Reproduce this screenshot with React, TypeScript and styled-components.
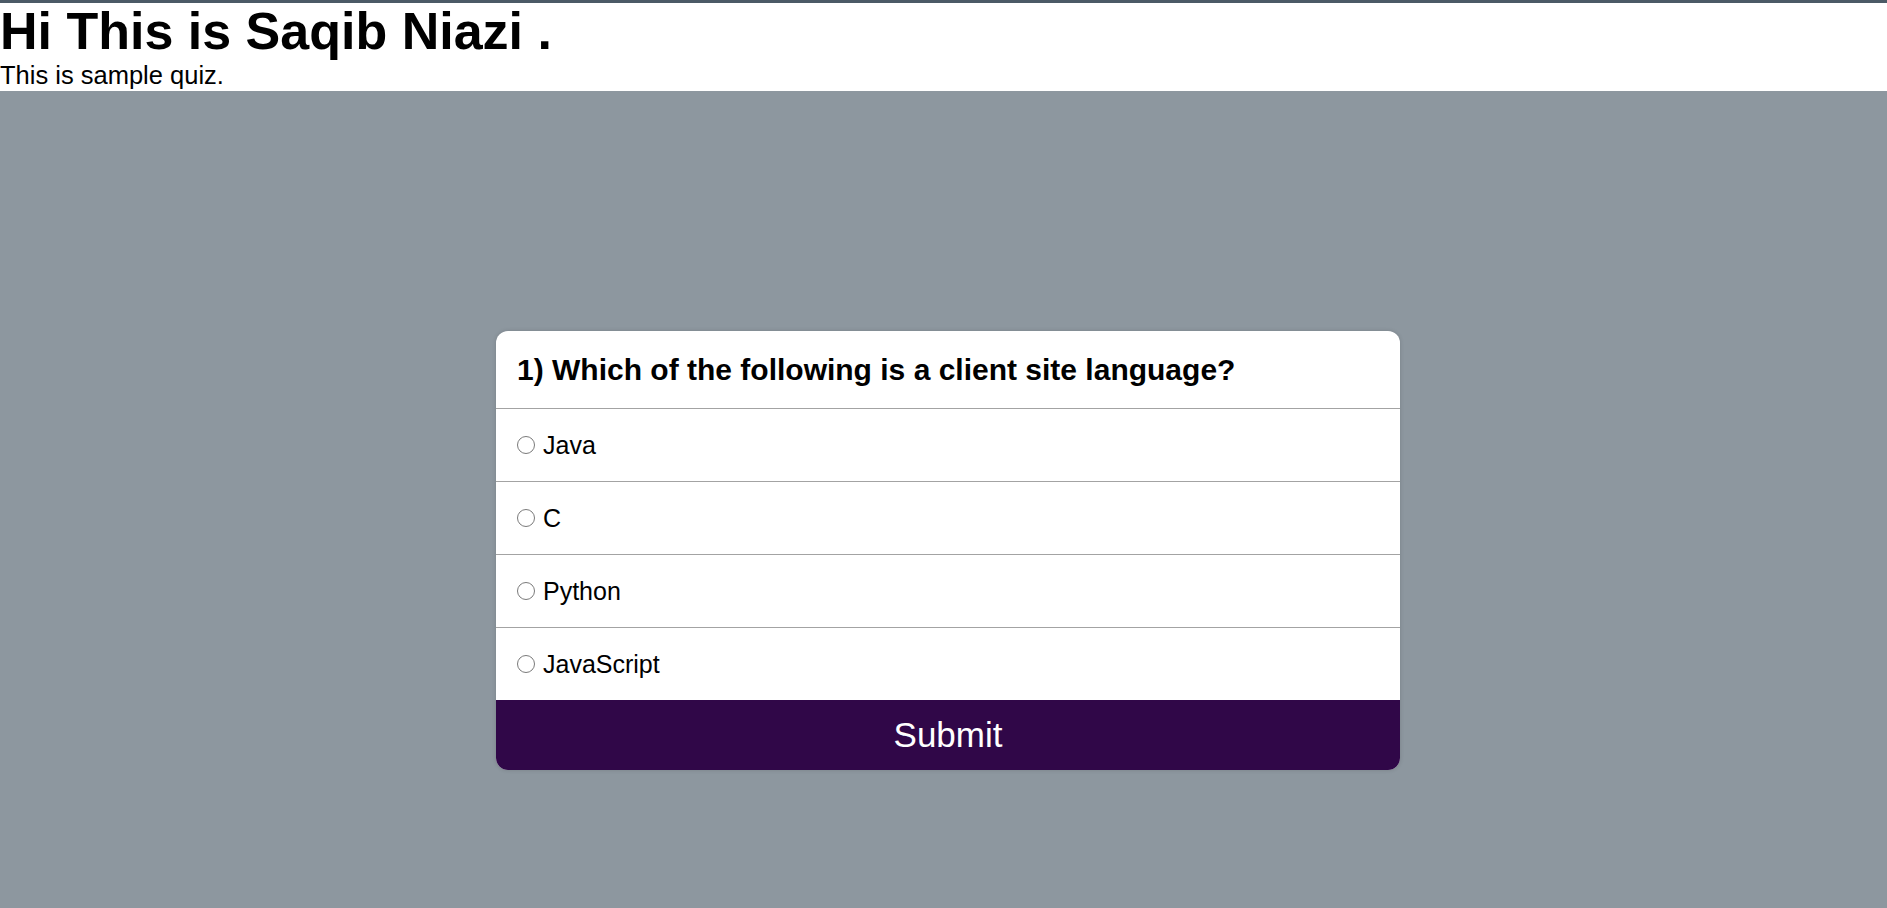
import { useState } from "react";
import styled, { createGlobalStyle } from "styled-components";

const GlobalStyle = createGlobalStyle`
  html, body {
    margin: 0;
    padding: 0;
    height: 100%;
  }
  body {
    font-family: "Liberation Sans", Arial, sans-serif;
    background: #8d979f;
    color: #000;
  }
  #root {
    min-height: 100%;
  }
`;

const options = ["Java", "C", "Python", "JavaScript"];

function App() {
  const [picked, setPicked] = useState<string | null>(null); // chosen answer

  return (
    <>
      <GlobalStyle />
      <Page>
        <Header>
          <Title>Hi This is Saqib Niazi .</Title>
          <Subtitle>This is sample quiz.</Subtitle>
        </Header>
        <Main>
          <Card>
            <Question>1) Which of the following is a client site language?</Question>
            {options.map((opt) => (
              <Option key={opt}>
                <Radio
                  type="radio"
                  name="answer"
                  checked={picked === opt}
                  onChange={() => setPicked(opt)}
                />
                <span>{opt}</span>
              </Option>
            ))}
            <SubmitButton>Submit</SubmitButton>
          </Card>
        </Main>
      </Page>
    </>
  );
}

export default App;

const Page = styled.div`
  min-height: 908px;
  display: flex;
  flex-direction: column;
`;

const Header = styled.header`
  background: #fff;
  border-top: 3px solid #4b5a66;
`;

const Title = styled.h1`
  margin: 0;
  font-size: 52px;
  line-height: 56px;
  font-weight: bold;
`;

const Subtitle = styled.p`
  margin: 0;
  font-size: 25.5px;
  line-height: 32px;
`;

const Main = styled.main`
  flex: 1;
  display: flex;
  justify-content: center;
  align-items: flex-start;
  padding: 240px 0 0 9px;
`;

const Card = styled.div`
  width: 904px;
  background: #fff;
  border-radius: 12px;
  overflow: hidden;
  box-shadow: 0 0 4px rgba(0, 0, 0, 0.15);
  display: flex;
  flex-direction: column;
`;

const Question = styled.h2`
  margin: 0;
  height: 77px;
  padding: 0 21px;
  display: flex;
  align-items: center;
  font-size: 30px;
  font-weight: bold;
`;

const Option = styled.label`
  height: 72px;
  border-top: 1px solid #a3a3a3;
  padding: 0 21px;
  display: flex;
  align-items: center;
  gap: 8px;
  font-size: 25px;
  cursor: pointer;
`;

const Radio = styled.input`
  appearance: none;
  margin: 0;
  width: 18px;
  height: 18px;
  border: 1.5px solid #7a7a7a;
  border-radius: 50%;
  background: #fff;
  cursor: pointer;

  &:checked {
    background: radial-gradient(circle, #0075ff 0 4px, #fff 4.5px);
    border-color: #0075ff;
  }
`;

const SubmitButton = styled.button`
  height: 70px;
  border: none;
  background: #300748;
  color: #fff;
  font-family: inherit;
  font-size: 35px;
  cursor: pointer;
`;
